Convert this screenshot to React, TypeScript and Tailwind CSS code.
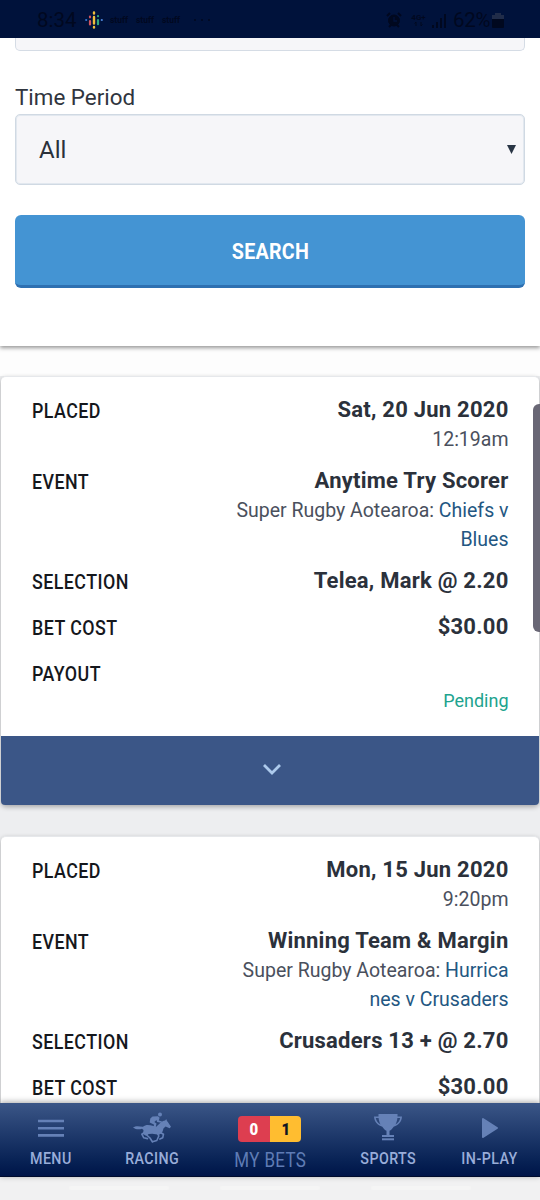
import type { ReactNode } from 'react';

type Bet = {
  date: string;
  time: string;
  event: string;
  competition: string;
  match: string[];
  selection: string;
  cost: string;
  status?: string;
};

const bets: Bet[] = [
  {
    date: 'Sat, 20 Jun 2020',
    time: '12:19am',
    event: 'Anytime Try Scorer',
    competition: 'Super Rugby Aotearoa: ',
    match: ['Chiefs v', 'Blues'],
    selection: 'Telea, Mark @ 2.20',
    cost: '$30.00',
    status: 'Pending',
  },
  {
    date: 'Mon, 15 Jun 2020',
    time: '9:20pm',
    event: 'Winning Team & Margin',
    competition: 'Super Rugby Aotearoa: ',
    match: ['Hurrica', 'nes v Crusaders'],
    selection: 'Crusaders 13 + @ 2.70',
    cost: '$30.00',
  },
];

function StatusBar() {
  return (
    <header className="flex h-[38px] shrink-0 items-center bg-[#00123b] text-[#00081f]">
      <span className="ml-[37px] mt-[2px] w-[40px] text-[20.5px] leading-none">8:34</span>
      <svg className="ml-[8px] mt-[1px] h-[18px] w-[18px]" viewBox="0 0 18 18" fill="none" strokeLinecap="round" strokeWidth="2.2">
        <path d="M1.2 9h.01" stroke="#3478d4" />
        <path d="M5 5.5v.8M5 10v3.5" stroke="#d05560" />
        <path d="M9 1.5v1M9 6v6.5M9 16v.5" stroke="#efbd3b" strokeWidth="2.4" />
        <path d="M13 5.2h.01M13 9v4.2" stroke="#31a77c" />
        <path d="M16.8 9h.01" stroke="#4c88dd" />
      </svg>
      <div className="ml-[7px] mt-[2px] flex gap-[8px] text-[8.5px] font-bold leading-none">
        <span className="w-[18px]">stuff</span>
        <span className="w-[18px]">stuff</span>
        <span className="w-[18px]">stuff</span>
      </div>
      <span className="ml-[14px] mt-[2px] flex gap-[5px]">
        <i className="size-[2px] rounded-full bg-[#00081f]" />
        <i className="size-[2px] rounded-full bg-[#00081f]" />
        <i className="size-[2px] rounded-full bg-[#00081f]" />
      </span>
      <div className="ml-auto mr-[36px] mt-[2px] flex items-center">
        <svg className="mr-[2px] h-[16px] w-[16px]" viewBox="0 0 16 16" fill="none" stroke="currentColor">
          <circle cx="8" cy="8.5" r="5.5" fill="currentColor" />
          <path d="M1 4l3-3M15 4l-3-3M3 15l2-2M13 15l-2-2" strokeWidth="2" />
          <path d="M8 5v4h3" stroke="#00123b" strokeWidth="1.3" />
        </svg>
        <div className="ml-[6px] flex w-[17px] flex-col items-center text-[8px] font-bold leading-[7px]">
          <span>4G+</span>
          <svg className="h-[6px] w-[9px]" viewBox="0 0 9 6" fill="none" stroke="currentColor">
            <path d="M2 5V1L.5 2.5M7 1v4l1.5-1.5" />
          </svg>
        </div>
        <svg className="ml-[4px] h-[15px] w-[16px]" viewBox="0 0 16 15" stroke="currentColor" strokeWidth="2">
          <path d="M2 15v-3M6 15V9M10 15V5M14 15V1" />
        </svg>
        <span className="ml-[6px] w-[38px] text-[20.5px] leading-none tracking-[-0.3px]">62%</span>
        <svg className="ml-[1px] h-[15px] w-[12px]" viewBox="0 0 12 15">
          <path d="M3 0h6v2h3v4H0V2h3z" fill="#202c49" />
          <path d="M0 6h12v8a1 1 0 0 1-1 1H1a1 1 0 0 1-1-1z" fill="#00081f" />
        </svg>
      </div>
    </header>
  );
}

function Label({ children }: { children: ReactNode }) {
  return (
    <dt className="mt-px origin-left scale-x-[0.87] whitespace-nowrap text-[20.5px] font-medium leading-[30px] tracking-[0.5px] text-[#15171c]">
      {children}
    </dt>
  );
}

function Row({ label, className = '', children }: { label: string; className?: string; children?: ReactNode }) {
  return (
    <div className={`flex justify-between ${className}`}>
      <Label>{label}</Label>
      <dd className="whitespace-nowrap text-right">{children}</dd>
    </div>
  );
}

function Strong({ children }: { children: ReactNode }) {
  return <div className="text-[22px] font-bold leading-[30px] tracking-[0.23px] text-[#2b313b]">{children}</div>;
}

function BetCard({ bet }: { bet: Bet }) {
  return (
    <article className="mx-px h-[429px] shrink-0 rounded-[5px] border-t border-[#e6e8eb] bg-white shadow-[0_2px_5px_rgba(0,0,0,0.3)]">
      <dl className="h-[359px] px-[30.5px] pt-[18px] text-[19.5px] leading-[29px] text-[#4a505d]">
        <Row label="PLACED" className="mb-[12px]">
          <Strong>{bet.date}</Strong>
          <div>{bet.time}</div>
        </Row>
        <Row label="EVENT" className="mb-[12px]">
          <Strong>{bet.event}</Strong>
          <div>
            {bet.competition}
            <a className="text-[#245782]">{bet.match[0]}</a>
          </div>
          <a className="block text-[#245782]">{bet.match[1]}</a>
        </Row>
        <Row label="SELECTION" className="mb-[15px]">
          <Strong>{bet.selection}</Strong>
        </Row>
        <Row label="BET COST" className="mb-[15px]">
          <Strong>{bet.cost}</Strong>
        </Row>
        {bet.status && (
          <>
            <Row label="PAYOUT" />
            <div className="mt-[-3px] text-right text-[18px] text-[#20a38e]">{bet.status}</div>
          </>
        )}
      </dl>
      <button className="flex h-[69px] w-full items-center justify-center rounded-b-[4px] bg-[#3b5687]">
        <svg className="ml-[4px] mt-[-3px] h-[14px] w-[20px]" viewBox="0 0 20 14" fill="none" stroke="#adcaec" strokeWidth="2.8">
          <path d="M2 3l8 8 8-8" />
        </svg>
      </button>
    </article>
  );
}

function HorseIcon() {
  return (
    <svg className="h-[32px] w-[40px]" viewBox="0 0 40 32" fill="#6581b7" stroke="#6581b7" strokeLinecap="round" strokeLinejoin="round">
      <circle cx="28" cy="2.6" r="2" stroke="none" />
      <path stroke="none" d="M26 4.2l1.6 1.6-.8 2.6 3.2 1-.5 1.3-4.4-.6-.6-2-2.2 1.9 2.2 1.6-.8 4-2-.5.2-2.5-4.2-2 .6-4.2 2.2-2z" />
      <path stroke="none" d="M1 15.5c3-2 6-1.2 10-.7 2.5-2.6 6.5-2 9.5-1l3.7 1 4-3.7c1.4-1.5 3.4-2.5 5-2.6l1-1.4.8 2 1 1.2 3 4.4-1.4 1.6-4-1.8-2 1.8-1.4 4.2-3 2.3-7-1-3.4.3-2.8 1.7-3-1.8.5-4-1.5-1.3C7.5 17.5 4 17.8 1 15.5z" />
      <path fill="none" strokeWidth="1.6" d="M12.5 20.5l-2.7 1.7 2 3.6 3.7.8M15.5 21l-.8 2 3.3 3 2.5 4M28 20.5l3.5 1.7-.8 3.6-2.8 1.3M25.5 21.5l1.3 2.5-2 4.5-4.3 1.2" />
    </svg>
  );
}

function TrophyIcon() {
  return (
    <svg className="h-[27px] w-[28px]" viewBox="0 0 28 27" fill="#6581b7">
      <path fillRule="evenodd" d="M4.5 0h19v2.5H28c-.3 5.5-3.6 8.6-8.3 10.2-1.2 2-2.7 3.3-4.2 4.1V21H20v2H8v-2h4.5v-4.2c-1.5-.8-3-2.1-4.2-4.1C3.6 11.1.3 8 0 2.5h4.5zM1.8 4c.5 3 2.1 5.1 4.7 6.5C5.4 8.5 4.8 6.3 4.6 4zm24.4 0h-2.8c-.2 2.3-.8 4.5-1.9 6.5C24.1 9.1 25.7 7 26.2 4z" />
      <path d="M8 24.3h12v2H8z" />
    </svg>
  );
}

function NavItem({ icon, children }: { icon: ReactNode; children: ReactNode }) {
  return (
    <a className="flex flex-col items-center">
      <span className="flex h-[43px] items-center justify-center pt-[6px]">{icon}</span>
      <span className="scale-x-[0.84] whitespace-nowrap text-[17px] font-medium leading-[25px] tracking-[0.5px] text-[#99add9]">
        {children}
      </span>
    </a>
  );
}

function BottomNav() {
  return (
    <nav className="z-10 grid h-[74px] shrink-0 grid-cols-[101px_102px_134px_102px_101px] border-b border-[#000b2d] bg-linear-to-b from-[#3b5687] to-[#001448] shadow-[0_-1px_6px_rgba(0,0,0,0.35)]">
      <NavItem
        icon={
          <svg className="h-[18px] w-[26px]" viewBox="0 0 26 18" stroke="#6581b7" strokeWidth="2.6">
            <path d="M0 2h26M0 9.2h26M0 16.4h26" />
          </svg>
        }
      >
        MENU
      </NavItem>
      <NavItem icon={<HorseIcon />}>RACING</NavItem>
      <a className="flex flex-col items-center">
        <span className="mr-px mt-[13px] flex h-[26px] w-[63px] overflow-hidden rounded-[4px] text-[17px] font-bold leading-[26px]">
          <b className="w-[32px] bg-[#dd3e50] text-center text-white">
            <span className="inline-block scale-x-[0.88]">0</span>
          </b>
          <b className="w-[31px] bg-[#ffbd30] text-center text-[#101522]">
            <span className="inline-block scale-x-[0.88]">1</span>
          </b>
        </span>
        <span className="mt-[5px] scale-x-[0.87] whitespace-nowrap text-[19.5px] leading-[28px] tracking-[0.4px] text-[#5f7cb5]">MY BETS</span>
      </a>
      <NavItem icon={<TrophyIcon />}>SPORTS</NavItem>
      <NavItem
        icon={
          <svg className="h-[22px] w-[18px]" viewBox="0 0 18 22" fill="#6581b7" stroke="#6581b7" strokeWidth="2" strokeLinejoin="round">
            <path d="M2 2l14 9-14 9z" />
          </svg>
        }
      >
        IN-PLAY
      </NavItem>
    </nav>
  );
}

export default function App() {
  return (
    <div className="flex h-[1200px] w-[540px] flex-col overflow-hidden bg-[#edeef0] font-['Roboto',sans-serif]">
      <StatusBar />
      <main className="relative flex h-[1065px] shrink-0 flex-col overflow-hidden">
        <section className="z-10 h-[308px] shrink-0 bg-white px-[15px] shadow-[0_2px_4px_rgba(0,0,0,0.4)]">
          <div className="h-[13px] rounded-b-[5px] border-x-[1.5px] border-b-[1.5px] border-[#d5dce5] bg-[#f6f6f9]" />
          <label className="mt-[31px] block h-[32px] text-[22.4px] leading-[31px] text-[#30353e]">Time Period</label>
          <div className="flex h-[71px] items-center justify-between rounded-[5px] border border-[#d0d9e3] bg-[#f6f6f9] pl-[23px] pr-[8px] text-[24px] text-[#2b313b] ring-1 ring-inset ring-[#e2e8ef]">
            <span>All</span>
            <svg className="h-[9px] w-[9px]" viewBox="0 0 9 9" fill="#293545">
              <path d="M0 0h9L4.5 9z" />
            </svg>
          </div>
          <button className="mt-[30px] flex h-[73px] w-full items-center justify-center rounded-[6px] border-b-[3px] border-[#2e70b1] bg-[#4494d3] pt-[3px] text-[22.6px] font-bold text-white">
            <span className="scale-x-[0.87] tracking-[0.3px]">SEARCH</span>
          </button>
        </section>
        <div className="h-[30px] shrink-0 bg-[#fdfdfd]" />
        <div className="flex shrink-0 flex-col gap-[30.5px]">
          {bets.map((bet) => (
            <BetCard key={bet.date} bet={bet} />
          ))}
        </div>
        <div className="absolute right-0 top-[366px] z-20 h-[228px] w-[7px] rounded-l-[6px] bg-[#696775]" />
      </main>
      <BottomNav />
      <footer className="flex h-[23px] shrink-0 justify-center gap-[51px] bg-[#f1f1f2] pt-[9px]">
        <i className="h-[4px] w-[100px] rounded-full bg-[#f5f5f5]" />
        <i className="h-[4px] w-[100px] rounded-full bg-[#f5f5f5]" />
        <i className="h-[4px] w-[100px] rounded-full bg-[#f5f5f5]" />
      </footer>
    </div>
  );
}
